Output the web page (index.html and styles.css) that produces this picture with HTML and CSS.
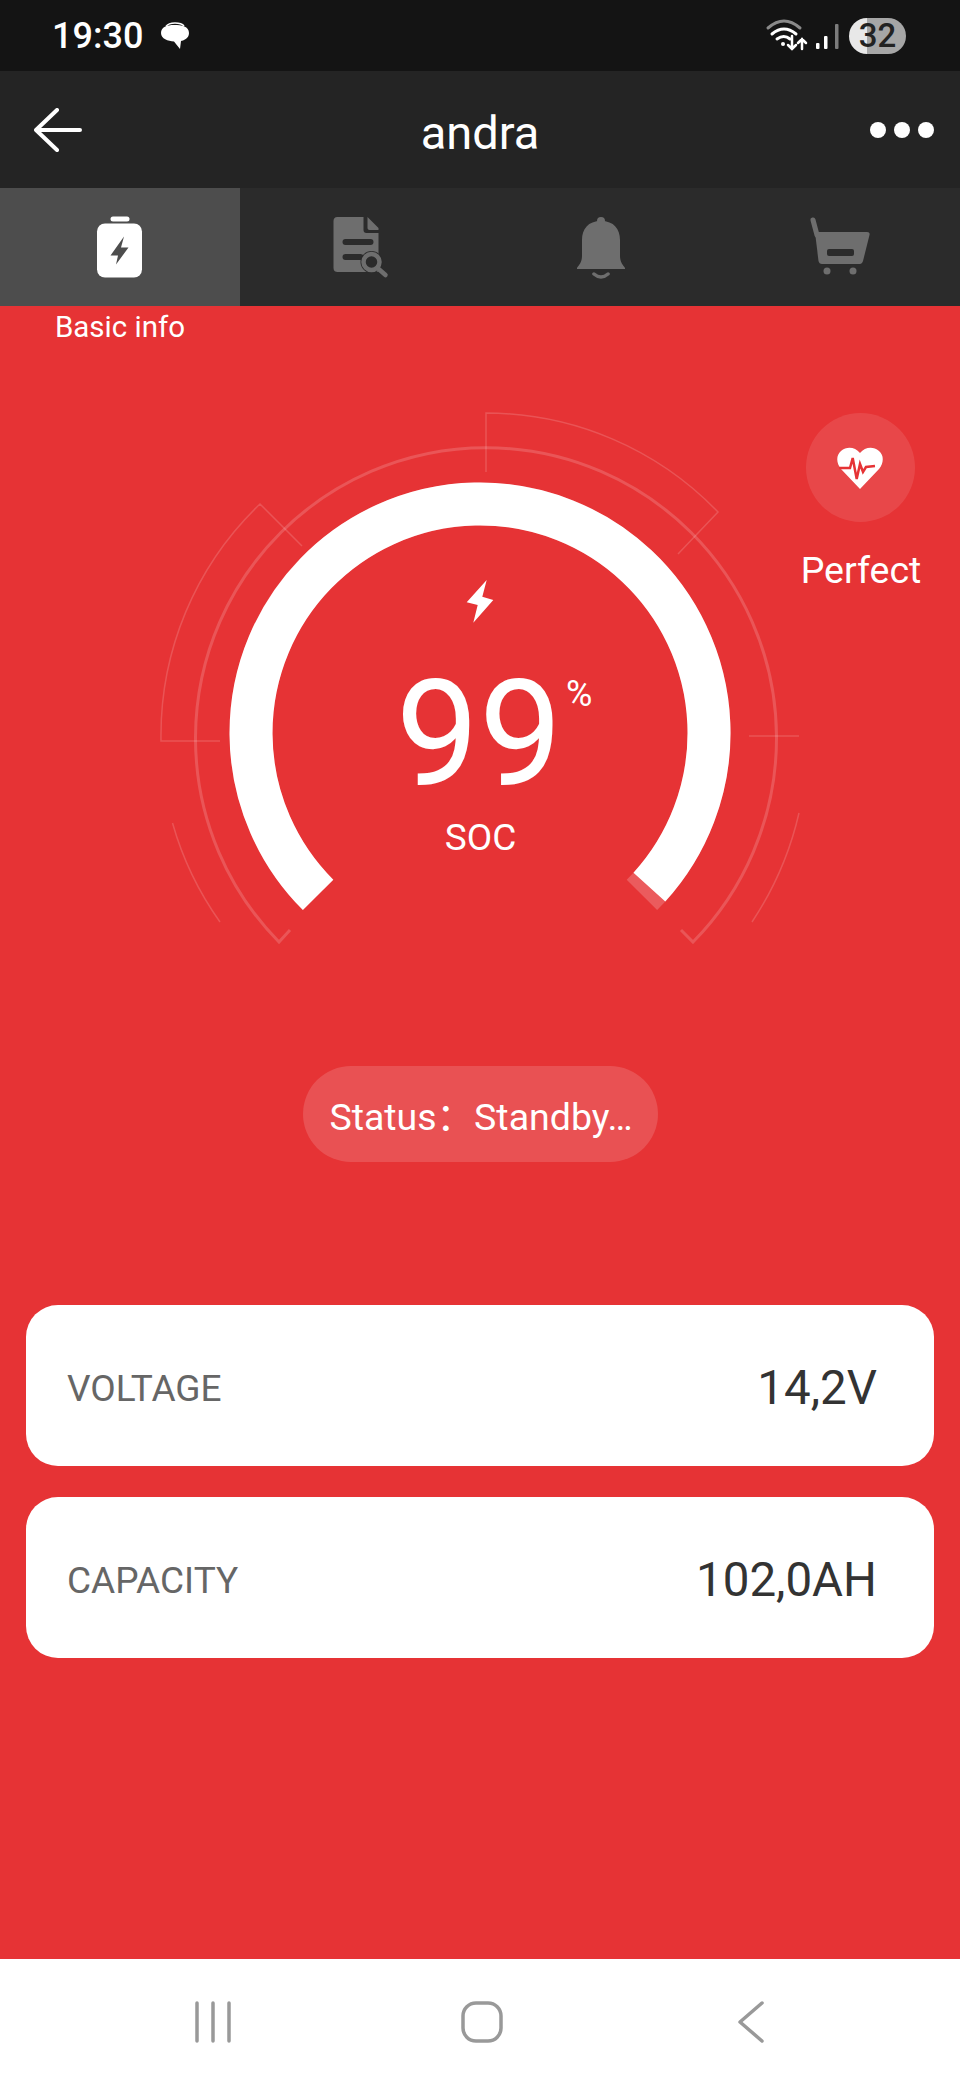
FILE: index.html
```html
<!doctype html>
<html>
  <head>
    <meta charset="utf-8">
    <title>andra</title>
    <meta name="viewport" content="width=device-width,minimum-scale=1,initial-scale=1">
    <link rel="stylesheet" href="styles.css">
  </head>
  <body>
    <div class="screen">
      <header class="status-bar">
        <span class="clock">19:30</span>
        <svg class="chat-icon" viewBox="0 0 28 28">
          <path class="chat-shadow" d="M5 4.500C7 1.500 10 1 14 1c4 0 7 .5 9 3" />
          <path d="M13 3c8 0 15 1.500 15 8 0 6-6 7.500-8 8l-1 8-6-7.500C7 19 0 17 0 11 0 5 6 3 13 3z" />
        </svg>
        <svg class="signal-icons" viewBox="0 0 85 50">
          <path class="dim" d="M8 17Q24 3 40 17" />
          <path d="M12 23Q24 13 36 23M17 28Q24 23 30 28" />
          <circle cx="23" cy="33" r="2" />
          <path class="thin" d="M32 25V38M28 34L32 38 36 34M42 38V28M38 32L42 28 46 32" />
          <rect x="56" y="32" width="3.500" height="6" rx="1" />
          <rect x="64" y="25" width="3.500" height="13" rx="1" />
          <rect class="dim-fill" x="75" y="13" width="3.500" height="25" rx="1" />
        </svg>
        <span class="battery-pill">32</span>
      </header>

      <div class="app-bar">
        <svg class="back-arrow" viewBox="0 0 48 44">
          <path d="M2 22H46M23 2L2 22 23 42" />
        </svg>
        <h1>andra</h1>
        <div class="more"><span></span><span></span><span></span></div>
      </div>

      <nav class="tabs">
        <div class="tab active">
          <svg class="tab-icon" viewBox="2 1.500 64 64">
            <rect class="white" x="24.500" y="3" width="19" height="5" rx="2.500" />
            <rect class="white" x="11" y="10" width="45" height="54" rx="8" />
            <path class="bolt-dark" d="M38 23L24.500 42H32L30 51 42.500 34H35z" />
          </svg>
        </div>
        <div class="tab">
          <svg class="tab-icon" viewBox="1.500 2 64 64">
            <path class="grey" d="M11 4C8 4 7 6 7 8V55C7 58 9 59 11 59H52V20L40 20C38 20 37 19 37 17V4z" />
            <path class="grey" d="M41 4L52 15V17H43C42 17 41 16 41 15z" />
            <path class="tab-line" d="M19 29H44M19 44H34" />
            <circle class="lens-gap" cx="45" cy="49" r="11" />
            <circle class="lens" cx="45" cy="49" r="8" />
            <path class="lens" d="M51 55L59 62" />
          </svg>
        </div>
        <div class="tab">
          <svg class="tab-icon" viewBox="-1 1 64 64">
            <circle class="grey" cx="32" cy="7" r="4" />
            <path class="grey" d="M32 7C19 7 13 15 13 26V42C13 48 10 51 8 54V55H56V54C54 51 51 48 51 42V26C51 15 45 7 32 7z" />
            <path class="clapper" d="M25 60Q32 66 39 60" />
          </svg>
        </div>
        <div class="tab">
          <svg class="tab-icon cart" viewBox="0 0 64 64">
            <path class="cart-handle" d="M5 5L9 20" />
            <path class="grey" d="M7 17H59C61 17 62 18 61.500 20L55 46C54.500 48 53 49 52 49H14C12 49 11 48 10.500 46z" />
            <rect class="cart-slot" x="19" y="34" width="27" height="7" rx="2" />
            <circle class="grey" cx="19" cy="56" r="3.500" />
            <circle class="grey" cx="45" cy="56" r="3.500" />
          </svg>
        </div>
      </nav>

      <main class="content">
        <div class="tab-label">Basic info</div>

        <section class="gauge">
          <svg class="gauge-art" viewBox="0 400 960 560">
            <path class="hairline" d="M220 741H161A320 320 0 0 1 260 504L302 546" />
            <path class="hairline" d="M486 472V413A322 322 0 0 1 718 512L678 554" />
            <path class="hairline" d="M749 736H799" />
            <path class="hairline" d="M172.500 823A322 322 0 0 0 220 922" />
            <path class="hairline" d="M799 813A330 330 0 0 1 752 922" />
            <path class="ring" d="M290 930L279 942A290.500 290.500 0 1 1 693 942L681 930" />
            <path class="arc-rest" d="M318.100 894.900A229 229 0 1 1 641.900 894.900" />
            <path class="arc-value" d="M318.100 894.900A229 229 0 1 1 649.400 887.100" />
            <path class="arc-bolt" d="M486.700 580L466.700 602.300 477.700 605 473.300 622.700 493.300 600 482.300 596.700z" />
          </svg>

          <div class="readout">
            <div class="percent"><span class="percent-num">99</span><span class="percent-sign">%</span></div>
            <div class="soc">SOC</div>
          </div>

          <div class="health">
            <div class="health-circle">
              <svg class="heart" viewBox="0 0 46 42">
                <path d="M23 42L4 22C-1 16-1 8 4 4 10-1 18 0 23 6 28 0 36-1 42 4 47 8 47 16 42 22z" />
                <path class="pulse" d="M2 21H13L15.700 11 19.700 32 23 17 26 25 29 20 38 19" />
              </svg>
            </div>
            <div class="health-text">Perfect</div>
          </div>
        </section>

        <div class="status-pill">Status：Standby…</div>

        <section class="cards">
          <div class="card">
            <span class="card-label">VOLTAGE</span>
            <span class="card-value">14,2V</span>
          </div>
          <div class="card">
            <span class="card-label">CAPACITY</span>
            <span class="card-value">102,0AH</span>
          </div>
        </section>
      </main>

      <footer class="nav-bar">
        <svg class="nav-icon bars" viewBox="0 0 40 44">
          <path d="M4 3V41M20 3V41M36 3V41" />
        </svg>
        <svg class="nav-icon home" viewBox="0 0 44 44">
          <rect x="3" y="3" width="38" height="38" rx="13" />
        </svg>
        <svg class="nav-icon back" viewBox="0 0 28 44">
          <path d="M25 3L3 22 25 41" />
        </svg>
      </footer>
    </div>
  </body>
</html>
```

FILE: styles.css
```css
body {
  margin: 0;
  font-family: Roboto, "Noto Sans CJK SC", sans-serif;
  color: #fff;
}

.screen {
  display: flex;
  flex-direction: column;
  width: 960px;
  height: 2080px;
  overflow: hidden;
}

.status-bar {
  display: flex;
  align-items: center;
  flex: none;
  height: 71px;
  padding: 0 54px 0 52px;
  box-sizing: border-box;
  background: #141414;
}

.clock {
  font-size: 36px;
  font-weight: 500;
  line-height: 90px;
  height: 90px;
}

.chat-icon {
  width: 28px;
  height: 28px;
  margin: 0 0 0 18px;
  fill: #fff;
}

.chat-shadow {
  fill: none;
  stroke: #fff;
  stroke-width: 1.500;
}

.signal-icons {
  width: 85px;
  height: 50px;
  margin-left: auto;
  fill: #fff;
}

.signal-icons path {
  fill: none;
  stroke: #fff;
  stroke-width: 3;
  stroke-linecap: round;
}

.signal-icons path.dim {
  stroke: #8a8a8a;
}

.signal-icons path.thin {
  stroke-width: 2.500;
}

.signal-icons .dim-fill {
  fill: #7c7c7c;
}

.battery-pill {
  width: 57px;
  height: 36px;
  margin-left: 4px;
  border-radius: 18px;
  background: linear-gradient(90deg, #e8e8e8 31%, #a6a6a6 31%);
  color: #222;
  font-size: 33px;
  font-weight: 500;
  line-height: 36px;
  text-align: center;
}

.app-bar {
  display: grid;
  grid-template-columns: 1fr auto 1fr;
  align-items: center;
  flex: none;
  height: 117px;
  padding: 0 26px;
  box-sizing: border-box;
  background: #242424;
}

.app-bar h1 {
  margin: 5px 0 0;
  font-size: 47px;
  font-weight: 400;
}

.back-arrow {
  width: 48px;
  height: 44px;
  margin-left: 8px;
  fill: none;
  stroke: #fff;
  stroke-width: 4;
  stroke-linecap: round;
  stroke-linejoin: round;
}

.more {
  display: flex;
  gap: 8px;
  justify-self: end;
}

.more span {
  width: 16px;
  height: 16px;
  border-radius: 50%;
  background: #fff;
}

.tabs {
  display: grid;
  grid-template-columns: repeat(4, 1fr);
  flex: none;
  height: 118px;
  background: #2b2b2b;
}

.tab {
  display: flex;
  align-items: center;
  justify-content: center;
}

.tab.active {
  background: #4d4d4d;
}

.tab-icon {
  width: 64px;
  height: 64px;
}

.white { fill: #fff; }
.grey { fill: #6e6e6e; }
.bolt-dark { fill: #4d4d4d; }

.tab-line {
  fill: none;
  stroke: #2b2b2b;
  stroke-width: 6;
  stroke-linecap: round;
}

.lens-gap {
  fill: #2b2b2b;
}

.lens {
  fill: none;
  stroke: #6e6e6e;
  stroke-width: 4.500;
  stroke-linecap: round;
}

.clapper {
  fill: none;
  stroke: #6e6e6e;
  stroke-width: 3.500;
  stroke-linecap: round;
}

.cart-handle {
  fill: none;
  stroke: #6e6e6e;
  stroke-width: 5;
  stroke-linecap: round;
}

.cart-slot {
  fill: #2b2b2b;
}

.content {
  flex: 1;
  background: #e63335;
}

.tab-label {
  width: 240px;
  padding-top: 1px;
  height: 39px;
  font-size: 29.500px;
  line-height: 40px;
  text-align: center;
}

.gauge {
  position: relative;
  height: 614px;
}

.gauge-art {
  display: block;
  position: absolute;
  left: 0;
  top: 54px;
  width: 960px;
  height: 560px;
}

.hairline {
  fill: none;
  stroke: rgba(255, 255, 255, 0.16);
  stroke-width: 1.500;
}

.ring {
  fill: none;
  stroke: rgba(255, 255, 255, 0.17);
  stroke-width: 3;
}

.arc-rest {
  fill: none;
  stroke: rgba(255, 255, 255, 0.2);
  stroke-width: 43;
}

.arc-value {
  fill: none;
  stroke: #fff;
  stroke-width: 43;
}

.arc-bolt {
  fill: #fff;
}

.readout {
  position: absolute;
  left: 0;
  right: 0;
  top: 324px;
  text-align: center;
}

.percent {
  position: relative;
  width: 170px;
  margin: 0 auto;
  padding-right: 2px;
  box-sizing: border-box;
  font-size: 148px;
  font-weight: 400;
  line-height: 130px;
}

.percent-sign {
  position: absolute;
  left: 171px;
  top: 4px;
  font-size: 36px;
  line-height: 40px;
  font-weight: 400;
}

.soc {
  margin-top: 16px;
  padding-left: 1px;
  font-size: 37px;
  line-height: 44px;
}

.health {
  position: absolute;
  right: 20px;
  top: 67px;
  display: flex;
  flex-direction: column;
  align-items: center;
  width: 160px;
}

.health-circle {
  display: flex;
  align-items: center;
  justify-content: center;
  width: 109px;
  height: 109px;
  border-radius: 50%;
  background: rgba(255, 255, 255, 0.1);
}

.heart {
  width: 46px;
  height: 42px;
  fill: #fff;
}

.pulse {
  fill: none;
  stroke: #e63335;
  stroke-width: 2.500;
}

.health-text {
  margin: 26px 0 0 2px;
  font-size: 37.500px;
  line-height: 44px;
}

.status-pill {
  width: 355px;
  height: 96px;
  margin: 106px auto 0;
  padding-left: 2px;
  box-sizing: border-box;
  border-radius: 48px;
  background: rgba(255, 255, 255, 0.15);
  font-size: 37.500px;
  line-height: 103px;
  text-align: center;
}

.cards {
  display: flex;
  flex-direction: column;
  gap: 31px;
  margin: 143px 26px 0;
}

.card {
  display: flex;
  align-items: center;
  justify-content: space-between;
  height: 161px;
  padding: 5px 57px 0 41px;
  box-sizing: border-box;
  border-radius: 32px;
  background: #fff;
}

.card-label {
  color: #666;
  font-size: 37px;
}

.card-value {
  color: #333;
  font-size: 47.500px;
}

.nav-bar {
  display: grid;
  grid-template-columns: repeat(3, 269px);
  justify-items: center;
  align-items: center;
  flex: none;
  height: 121px;
  padding: 4px 0 0 78.500px;
  box-sizing: border-box;
  background: #fff;
}

.nav-icon {
  height: 44px;
  fill: none;
  stroke: #999;
  stroke-width: 3.500;
  stroke-linecap: round;
  stroke-linejoin: round;
}

.nav-icon.bars { width: 40px; }
.nav-icon.home { width: 44px; }
.nav-icon.back { width: 28px; }
```
